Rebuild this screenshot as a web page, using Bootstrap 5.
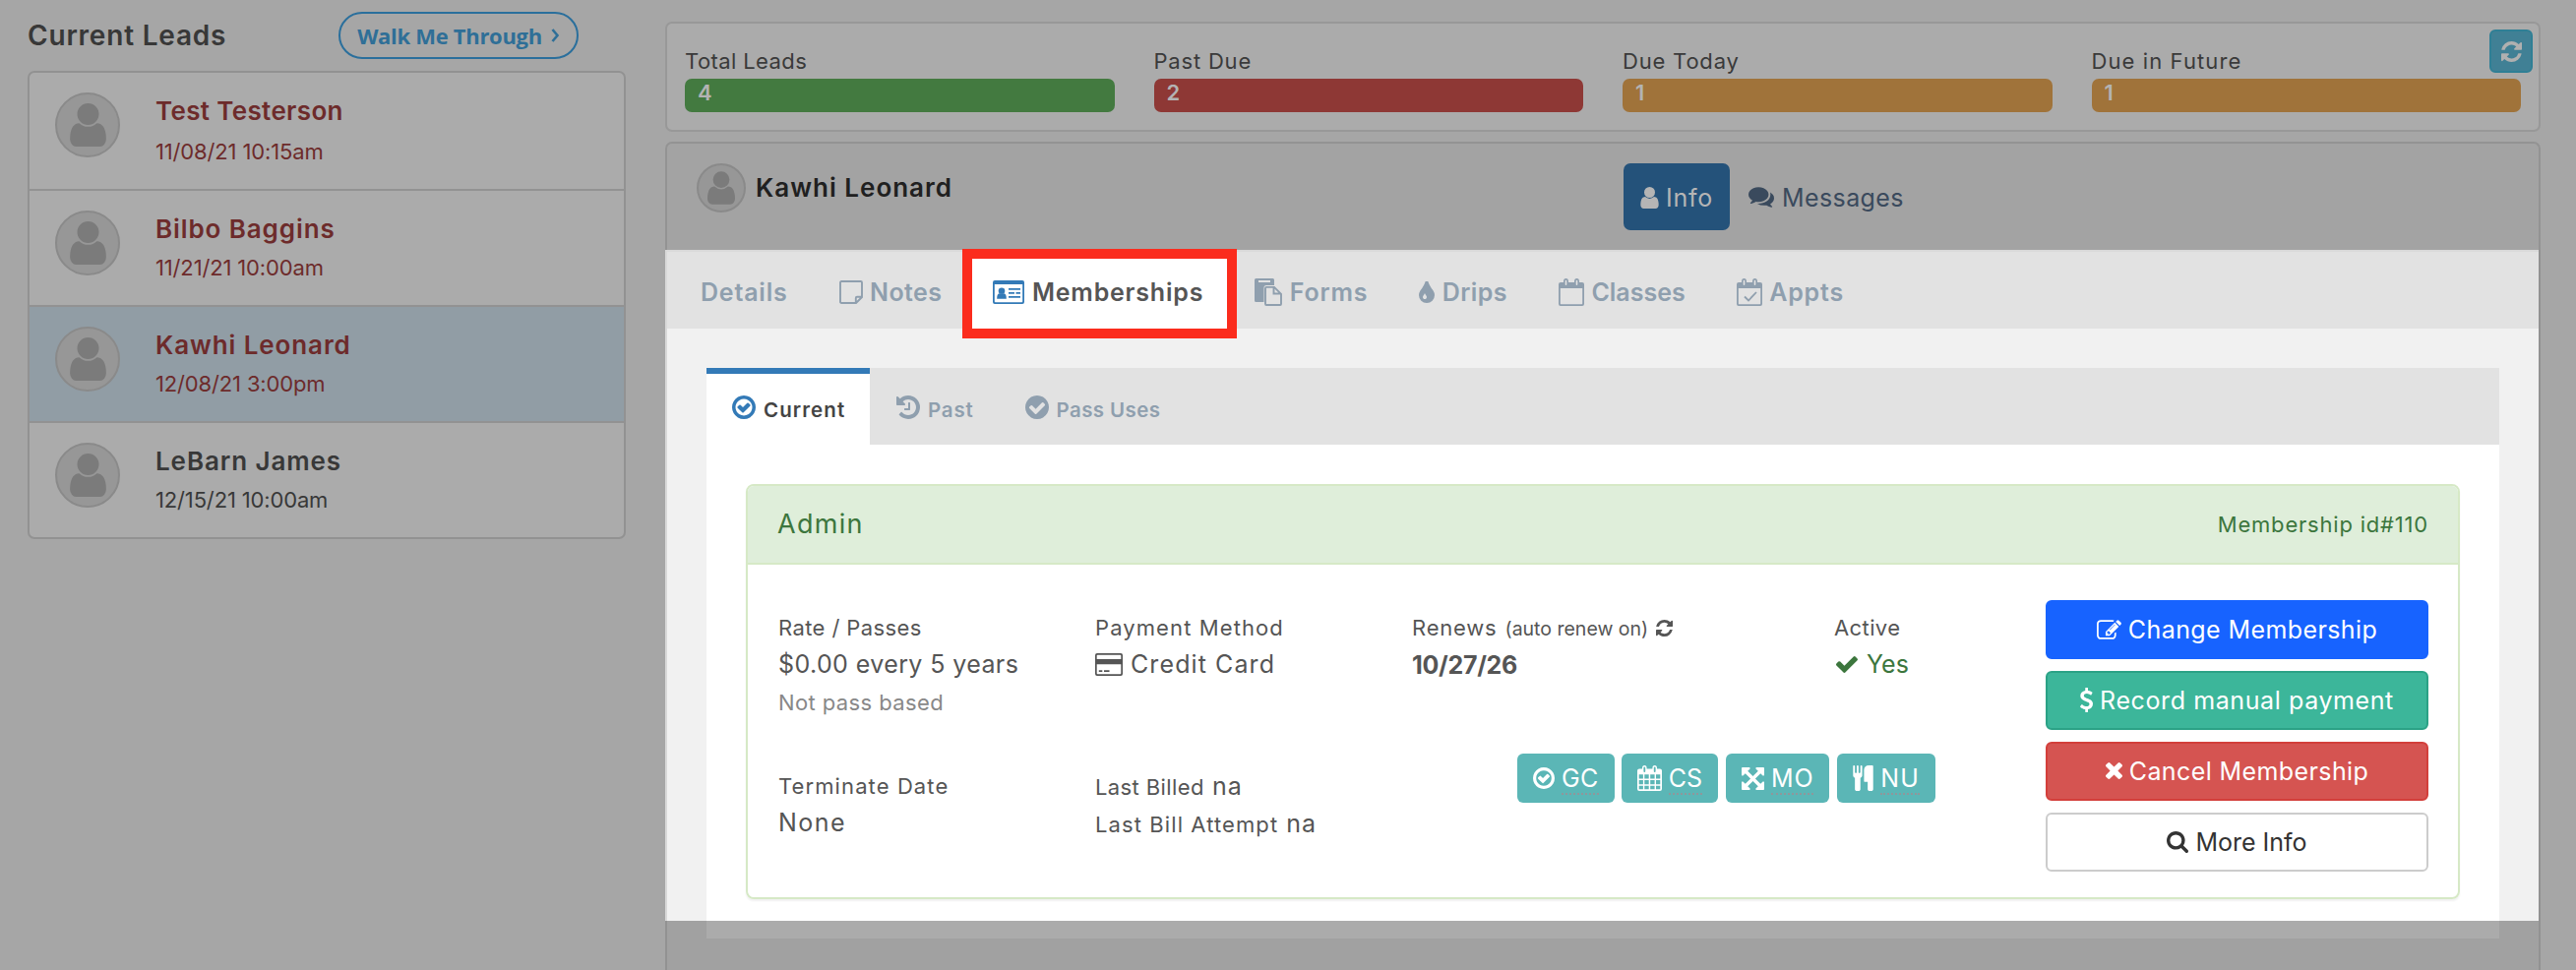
<!DOCTYPE html>
<html lang="en">
<head>
    <meta charset="UTF-8">
    <meta name="viewport" content="width=device-width, initial-scale=1">
    <title>Current Leads</title>
    <link href="https://cdn.jsdelivr.net/npm/bootstrap@5.3.2/dist/css/bootstrap.min.css" rel="stylesheet">
    <script defer src="https://cdn.jsdelivr.net/npm/bootstrap@5.3.2/dist/js/bootstrap.bundle.min.js"></script>
    <style>
        body {
            height: 986px;
            overflow: hidden;
            background: #a6a6a6;
            color: #555;
            font-family: Inter, "Liberation Sans", sans-serif;
            font-size: 25px;
            line-height: 30px;
            white-space: nowrap;
        }
        svg { flex: none; fill: currentColor; overflow: visible; }
        .ls-1 { letter-spacing: .4px; }
        .ls-2 { letter-spacing: .8px; }
        .ls-3 { letter-spacing: 1.1px; }
        .ls-4 { letter-spacing: 1.5px; }
        .fs-label { font-size: 22px; }

        /* leads list */
        .leads-col { width: 608px; margin-left: 28px; }
        .leads-head { height: 72px; padding-right: 48px; color: #383838; }
        .leads-title { font-size: 28px; letter-spacing: .8px; }
        .walk-btn {
            width: 244px;
            height: 48px;
            border: 2px solid #2a6f9c;
            border-radius: 24px;
            color: #2f6f97;
            font: 700 22px "Open Sans", sans-serif;
            letter-spacing: -.3px;
            gap: 9px;
        }
        .leads-list { border: 2px solid #929292; border-radius: 7px; background: #ababab; overflow: hidden; }
        .lead-row { height: 116px; padding: 20px 0 0 26px; gap: 36px; color: #6d2b2b; }
        .lead-row:first-child { height: 118px; }
        .lead-row + .lead-row { border-top: 2px solid #929292; height: 118px; }
        .lead-name { font-size: 26px; font-weight: 600; letter-spacing: .9px; }
        .lead-row:first-child .lead-name { letter-spacing: .35px; }
        .lead-date { margin-top: 9px; font-size: 22px; letter-spacing: -.15px; }
        .lead-row:first-child .lead-date { margin-top: 11px; }
        .lead-row.selected { background: #919da5; }
        .lead-row.upcoming { color: #383838; }
        .lead-text { padding-top: 4px; }
        .avatar {
            width: 66px;
            height: 66px;
            border: 2px solid #8a8a8a;
            border-radius: 50%;
            background: #979797;
            color: #7b7b7b;
        }

        /* summary */
        .main-col { width: 1906px; margin-left: 40px; padding-top: 22px; }
        .summary { height: 112px; border: 2px solid #989898; border-radius: 7px; background: #ababab; padding: 23px 18px 0; gap: 40px; color: #3a3a3a; }
        .meter { height: 34px; margin-top: 3px; padding-left: 13px; border-radius: 7px; color: #b3b3b3; font: 600 22px/28px Inter, sans-serif; }
        .meter-green { background: #437a40; }
        .meter-red { background: #8e3835; }
        .meter-orange { background: #a0733a; }
        .refresh-btn { top: 6px; right: 6px; width: 44px; height: 44px; border: 2px solid #2f7f95; border-radius: 6px; background: #408095; color: #b0b0b0; }

        /* lead detail */
        .detail-head { height: 110px; margin-top: 10px; border: 2px solid #939393; border-bottom: 0; border-radius: 7px 7px 0 0; background: #a3a3a3; padding: 20px 0 0 30px; }
        .detail-head .avatar { width: 50px; height: 50px; }
        .detail-name { width: 892px; padding: 10px 0 0 10px; color: #202020; font-size: 26px; letter-spacing: 1px; }
        .info-pill { width: 108px; height: 68px; border-radius: 7px; background: #24527a; color: #b5b5b5; gap: 7px; padding-top: 1px; }
        .msg-pill { height: 68px; padding: 1px 0 0 19px; color: #3a4a5d; gap: 8px; }
        .lit { height: 682px; border-left: 2px solid #d9d9d9; border-right: 2px solid #929292; background: #f1f1f1; }
        .lead-tabs { height: 80px; border-top: 2px solid #dadada; background: #e2e2e2; padding-left: 8px; color: #8f9fae; font-weight: 600; }
        .lead-tab { padding: 3px 26px 0; gap: 7.5px; }
        .lead-tab.current { background: #fff; color: #555; position: relative; }
        .lead-tab.current svg, .sub-tab.current svg { color: #337ab7; }
        .lead-tab.current::after { content: ""; position: absolute; inset: -3px -8px -10px -5px; border: 10px solid #fb2c1d; }
        .sub-wrap { margin: 40px 40px 0; height: 562px; background: #fff; }
        .sub-tabs { height: 78px; background: #e2e2e2; color: #8f9fae; font-size: 20.5px; font-weight: 600; }
        .sub-tab { border-top: 6px solid transparent; gap: 8px; padding: 1px 0 0 27px; }
        .sub-tab svg { margin-top: -5px; }
        .sub-tab.current { width: 166px; border-color: #337ab7; background: #fff; color: #444; padding-left: 26px; }

        /* membership panel */
        .member { margin: 40px 40px 0; height: 422px; border: 2px solid #d6e9c6; border-radius: 8px; box-shadow: 0 2px 2px rgba(0, 0, 0, .06); }
        .member-head { height: 80px; border-bottom: 2px solid #d6e9c6; border-radius: 6px 6px 0 0; background: #dfeeda; padding: 0 30px; color: #3c763d; }
        .member-name { font-size: 27px; letter-spacing: 1.3px; }
        .member-grid { display: grid; grid-template-columns: 322px 322px 429px 215px; grid-template-rows: 143px auto; padding: 49px 0 0 31px; }
        .value { margin-top: 7px; }
        .note { margin-top: 9px; color: #888; }
        .renew-note { font-size: 19.5px; }
        .renew-date { font-weight: 700; letter-spacing: -.3px; }
        .yes { color: #3c763d; gap: 9px; }
        .second { padding-top: 18px; }
        .chips { grid-column: 3 / 5; padding-left: 107px; gap: 8px; }
        .chip { height: 50px; border-radius: 6px; background: #5bb6b6; color: #fff; padding: 0 16px; gap: 7px; }
        .chip span { border-bottom: 2px dotted #8f979b; margin-bottom: -2px; }
        .chip:first-child { margin-right: -1px; }
        .actions { width: 390px; margin: 36px 30px 0 0; gap: 12px; }
        .act { height: 60px; border: 2px solid; border-radius: 6px; color: #fff; gap: 7px; padding-bottom: 1px; }
        .act-blue { background: #1763ff; border-color: #1763ff; }
        .act-teal { background: #3cb69a; border-color: #2ba286; letter-spacing: .6px; }
        .act-red { background: #d55451; border-color: #d33f3b; }
        .act-plain { background: #fff; border-color: #ccc; color: #333; }
        .detail-foot { height: 60px; border: solid #929292; border-width: 0 2px; background: #a1a1a1; padding: 0 40px; }
        .foot-strip { height: 18px; background: #ababab; }
    </style>
</head>
<body class="d-flex">

<svg width="0" height="0" class="position-absolute">
    <symbol id="user" viewBox="256 128 1280 1536"><path d="M1536 1399q0 109-62.5 187t-150.5 78h-854q-88 0-150.5-78t-62.5-187q0-85 8.5-160.5t31.5-152 58.5-131 94-89 134.5-34.5q131 128 313 128t313-128q76 0 134.5 34.5t94 89 58.5 131 31.5 152 8.5 160.5zm-256-887q0 159-112.5 271.5t-271.5 112.5-271.5-112.5-112.5-271.5 112.5-271.5 271.5-112.5 271.5 112.5 112.5 271.5z"/></symbol>
    <symbol id="refresh" viewBox="128 128 1536 1536"><path d="M1639 1056q0 5-1 7-64 268-268 434.5t-478 166.5q-146 0-282.5-55t-243.5-157l-129 129q-19 19-45 19t-45-19-19-45v-448q0-26 19-45t45-19h448q26 0 45 19t19 45-19 45l-137 137q71 66 161 102t187 36q134 0 250-65t186-179q11-17 53-117 8-23 30-23h192q13 0 22.5 9.5t9.5 22.5zm25-800v448q0 26-19 45t-45 19h-448q-26 0-45-19t-19-45 19-45l138-138q-148-137-349-137-134 0-250 65t-186 179q-11 17-53 117-8 23-30 23h-199q-13 0-22.5-9.5t-9.5-22.5v-7q65-268 270-434.5t480-166.5q146 0 284 55.5t245 156.5l130-129q19-19 45-19t45 19 19 45z"/></symbol>
    <symbol id="comments" viewBox="0 256 1792 1408"><path d="M1408 768q0 139-94 257t-256.5 186.5-353.5 68.5q-86 0-176-16-124 88-278 128-36 9-86 16h-3q-11 0-20.5-8t-11.5-21q-1-3-1-6.5t.5-6.5 2-6l2.5-5 3.5-5.5 4-5 4.5-5 4-4.5q5-6 23-25t26-29.5 22.5-29 25-38.5 20.5-44q-124-72-195-177t-71-224q0-139 94-257t256.5-186.5 353.5-68.5 353.5 68.5 256.5 186.5 94 257zm384 256q0 120-71 224.5t-195 176.5q10 24 20.5 44t25 38.5 22.5 29 26 29.5 23 25q1 1 4 4.5t4.5 5 4 5 3.5 5.5l2.5 5 2 6 .5 6.5-1 6.5q-3 14-13 22t-22 7q-50-7-86-16-154-40-278-128-90 16-176 16-271 0-472-132 58 4 88 4 161 0 309-45t264-129q125-92 192-212t67-254q0-77-23-152 129 71 204 178t75 230z"/></symbol>
    <symbol id="tint" viewBox="384 64 1024 1408"><path d="M896 1088q0-36-20-69-1-1-15.5-22.5t-25.5-38-25-44-21-50.5q-4-16-21-16t-21 16q-7 23-21 50.5t-25 44-25.5 38-15.5 22.5q-20 33-20 69 0 53 37.5 90.5t90.5 37.5 90.5-37.5 37.5-90.5zm512-128q0 212-150 362t-362 150-362-150-150-362q0-145 81-275 6-9 62.5-90.5t101-151 99.5-178 83-201.5q9-30 34-47t51-17 51.5 17 33.5 47q28 93 83 201.5t99.5 178 101 151 62.5 90.5q81 127 81 275z"/></symbol>
    <symbol id="check-circle-o" viewBox="128 128 1536 1536"><path d="M1299 813l-422 422q-19 19-45 19t-45-19l-294-294q-19-19-19-45t19-45l102-102q19-19 45-19t45 19l147 147 275-275q19-19 45-19t45 19l102 102q19 19 19 45t-19 45zm141 83q0-148-73-273t-198-198-273-73-273 73-198 198-73 273 73 273 198 198 273 73 273-73 198-198 73-273zm224 0q0 209-103 385.5t-279.5 279.5-385.5 103-385.5-103-279.5-279.5-103-385.5 103-385.5 279.5-279.5 385.5-103 385.5 103 279.5 279.5 103 385.5z"/></symbol>
    <symbol id="check-circle" viewBox="128 128 1536 1536"><path d="M1412 734q0-28-18-46l-91-90q-19-19-45-19t-45 19l-408 407-226-226q-19-19-45-19t-45 19l-91 90q-18 18-18 46 0 27 18 45l362 362q19 19 45 19 27 0 46-19l543-543q18-18 18-45zm252 162q0 209-103 385.5t-279.5 279.5-385.5 103-385.5-103-279.5-279.5-103-385.5 103-385.5 279.5-279.5 385.5-103 385.5 103 279.5 279.5 103 385.5z"/></symbol>
    <symbol id="history" viewBox="128 128 1536 1536"><path d="M1664 896q0 156-61 298t-164 245-245 164-298 61q-172 0-327-72.5t-264-204.5q-7-10-6.5-22.5t8.5-20.5l137-138q10-9 25-9 16 2 23 12 73 95 179 147t225 52q104 0 198.5-40.5t163.5-109.5 109.5-163.5 40.5-198.5-40.5-198.5-109.5-163.5-163.5-109.5-198.5-40.5q-98 0-188 35.5t-160 101.5l137 138q31 30 14 69-17 40-59 40h-448q-26 0-45-19t-19-45v-448q0-42 40-59 39-17 69 14l130 129q107-101 244.5-156.5t284.5-55.5q156 0 298 61t245 164 164 245 61 298zm-640-288v448q0 14-9 23t-23 9h-320q-14 0-23-9t-9-23v-64q0-14 9-23t23-9h224v-352q0-14 9-23t23-9h64q14 0 23 9t9 23z"/></symbol>
    <symbol id="check" viewBox="121 334 1550 1188"><path d="M1671 566q0 40-28 68l-724 724-136 136q-28 28-68 28t-68-28l-136-136-362-362q-28-28-28-68t28-68l136-136q28-28 68-28t68 28l294 295 656-657q28-28 68-28t68 28l136 136q28 28 28 68z"/></symbol>
    <symbol id="times" viewBox="302 366 1188 1188"><path d="M1490 1322q0 40-28 68l-136 136q-28 28-68 28t-68-28l-294-294-294 294q-28 28-68 28t-68-28l-136-136q-28-28-28-68t28-68l294-294-294-294q-28-28-28-68t28-68l136-136q28-28 68-28t68 28l294 294 294-294q28-28 68-28t68 28l136 136q28 28 28 68t-28 68l-294 294 294 294q28 28 28 68z"/></symbol>
    <symbol id="search" viewBox="64 128 1664 1664"><path d="M1216 832q0-185-131.5-316.5t-316.5-131.5-316.5 131.5-131.5 316.5 131.5 316.5 316.5 131.5 316.5-131.5 131.5-316.5zm512 832q0 52-38 90t-90 38q-54 0-90-38l-343-342q-179 124-399 124-143 0-273.5-55.5t-225-150-150-225-55.5-273.5 55.5-273.5 150-225 225-150 273.5-55.5 273.5 55.5 225 150 150 225 55.5 273.5q0 220-124 399l343 343q37 37 37 90z"/></symbol>
    <symbol id="usd" viewBox="430 0 932 1792"><path d="M1362 1185q0 153-99.5 263.5t-258.5 136.5v175q0 14-9 23t-23 9h-135q-13 0-22.5-9.5t-9.5-22.5v-175q-66-9-127.5-31t-101.5-44.5-74-48-46.5-37.5-17.5-18q-17-21-2-41l103-135q7-10 23-12 15-2 24 9l2 2q113 99 243 125 37 8 74 8 81 0 142.5-43t61.5-122q0-28-15-53t-33.5-42-58.5-37.5-66-32-80-32.5q-39-16-61.5-25t-61.5-26.5-62.5-31-56.5-35.5-53.5-42.5-43.5-49-35.5-58-21-66.5-8.5-78q0-138 98-242t255-134v-180q0-13 9.5-22.5t22.5-9.5h135q14 0 23 9t9 23v176q57 6 110.5 23t87 33.5 63.5 37.5 39 29 15 14q17 18 5 38l-81 146q-8 15-23 16-14 3-27-7-3-3-14.5-12t-39-26.5-58.5-32-74.5-26-85.5-11.5q-95 0-155 43t-60 111q0 26 8.5 48t29.5 41.5 39.5 33 56 31 60.5 27 70 27.5q53 20 81 31.5t76 35 75.5 42.5 62 50 53 63.5 31.5 76.5 13 94z"/></symbol>
    <symbol id="edit" viewBox="0 128 1792 1408"><path d="M888 1184l116-116-152-152-116 116v56h96v96h56zm440-720q-16-16-33 1l-350 350q-17 17-1 33t33-1l350-350q17-17 1-33zm80 594v190q0 119-84.5 203.5t-203.5 84.5h-832q-119 0-203.5-84.5t-84.5-203.5v-832q0-119 84.5-203.5t203.5-84.5h832q63 0 117 25 15 7 18 23 3 17-9 29l-49 49q-14 14-32 8-23-6-45-6h-832q-66 0-113 47t-47 113v832q0 66 47 113t113 47h832q66 0 113-47t47-113v-126q0-13 9-22l64-64q15-15 35-7t20 29zm-96-738l288 288-672 672h-288v-288zm444 132l-92 92-288-288 92-92q28-28 68-28t68 28l152 152q28 28 28 68t-28 68z"/></symbol>
    <symbol id="arrows" viewBox="128 128 1536 1536"><path d="M1411 541l-355 355 355 355 144-144q29-31 70-14 39 17 39 59v448q0 26-19 45t-45 19h-448q-42 0-59-40-17-39 14-69l144-144-355-355-355 355 144 144q31 30 14 69-17 40-59 40h-448q-26 0-45-19t-19-45v-448q0-42 40-59 39-17 69 14l144 144 355-355-355-355-144 144q-19 19-45 19-12 0-24-5-40-17-40-59v-448q0-26 19-45t45-19h448q42 0 59 40 17 39-14 69l-144 144 355 355 355-355-144-144q-31-30-14-69 17-40 59-40h448q26 0 45 19t19 45v448q0 42-39 59-13 5-25 5-26 0-45-19z"/></symbol>
    <symbol id="cutlery" viewBox="192 64 1408 1792"><path d="M832 128v640q0 61-35.5 111t-92.5 70v779q0 52-38 90t-90 38h-128q-52 0-90-38t-38-90v-779q-57-20-92.5-70t-35.5-111v-640q0-26 19-45t45-19 45 19 19 45v416q0 26 19 45t45 19 45-19 19-45v-416q0-26 19-45t45-19 45 19 19 45v416q0 26 19 45t45 19 45-19 19-45v-416q0-26 19-45t45-19 45 19 19 45zm768 0v1600q0 52-38 90t-90 38h-128q-52 0-90-38t-38-90v-512h-224q-13 0-22.5-9.5t-9.5-22.5v-800q0-132 94-226t226-94h256q26 0 45 19t19 45z"/></symbol>
    <symbol id="note" viewBox="0 0 24 24"><path d="M2.2 1h19.6q1.2 0 1.2 1.2V17l-6 6H2.2Q1 23 1 21.8V2.200Q1 1 2.200 1zM16.800 23v-5q0-1.200 1.200-1.200h5" fill="none" stroke="currentColor" stroke-width="1.900"/></symbol>
    <symbol id="id-card" viewBox="0 0 32 24"><path fill-rule="evenodd" d="M2 0h28q2 0 2 2v20q0 2-2 2H2q-2 0-2-2V2q0-2 2-2zM1.800 4v17.400q0 .8.8.8h26.800q.8 0 .8-.8V4z"/><circle cx="9" cy="10.700" r="3.300"/><path d="M4.200 18.800q-.2-5.500 3-5.500 1.800 1.400 3.600 0 3.200 0 3 5.500zM16 8h12v1.800H16zM16 12h6v1.800h-6zM23.500 12H28v1.800h-4.500zM16 16h12v1.800H16z"/></symbol>
    <symbol id="paste" viewBox="0 0 28 28"><path fill-rule="evenodd" d="M1.500 0h17q1.500 0 1.500 1.500V7h-8q-2.500 0-2.500 2.500V24h-8Q0 24 0 22.500v-21Q0 0 1.500 0zM4 2v2h12V2z"/><path d="M12 8.900h8l7 7V26q0 1-1 1H12q-1 0-1-1V9.900q0-1 1-1zM19.500 9v6.500h7" fill="none" stroke="currentColor" stroke-width="1.900"/></symbol>
    <symbol id="calendar" viewBox="0 0 26 28"><path fill-rule="evenodd" d="M2 4h3V3q0-3 2.500-3T10 3v1h6V3q0-3 2.500-3T21 3v1h3q2 0 2 2v20q0 2-2 2H2q-2 0-2-2V6q0-2 2-2zM1.800 10v15.500q0 .7.7.7h21q.7 0 .7-.7V10zM7.500 1.700q-.8 0-.8 1V6q0 1 .8 1t.8-1V2.700q0-1-.8-1zM18.500 1.700q-.8 0-.8 1V6q0 1 .8 1t.8-1V2.700q0-1-.8-1z"/></symbol>
    <symbol id="card-pay" viewBox="0 0 28 23"><path fill-rule="evenodd" d="M2 0h24q2 0 2 2v19q0 2-2 2H2q-2 0-2-2V2q0-2 2-2zM1.700 2.500V6h24.600V2.500q0-.8-.8-.8h-23q-.8 0-.8.800zM1.700 11.300v9.200q0 .8.8.8h23q.8 0 .8-.8v-9.200z"/><path d="M3.800 17.300h3.500V19H3.800zM9 17.300h5.500V19H9z"/></symbol>
</svg>

<div class="leads-col">
    <div class="leads-head d-flex align-items-center justify-content-between">
        <div class="leads-title fw-semibold">Current Leads</div>
        <div class="walk-btn d-flex align-items-center justify-content-center">Walk Me Through
            <svg width="9" height="14" viewBox="0 0 9 14"><path d="M1.500 1l5 6-5 6" fill="none" stroke="currentColor" stroke-width="2.600"/></svg>
        </div>
    </div>
    <div class="leads-list">
        <div class="lead-row d-flex">
            <div class="avatar d-flex align-items-center justify-content-center"><svg width="37" height="44"><use href="#user"/></svg></div>
            <div class="lead-text"><div class="lead-name">Test Testerson</div><div class="lead-date">11/08/21 10:15am</div></div>
        </div>
        <div class="lead-row d-flex">
            <div class="avatar d-flex align-items-center justify-content-center"><svg width="37" height="44"><use href="#user"/></svg></div>
            <div class="lead-text"><div class="lead-name">Bilbo Baggins</div><div class="lead-date">11/21/21 10:00am</div></div>
        </div>
        <div class="lead-row selected d-flex">
            <div class="avatar d-flex align-items-center justify-content-center"><svg width="37" height="44"><use href="#user"/></svg></div>
            <div class="lead-text"><div class="lead-name">Kawhi Leonard</div><div class="lead-date">12/08/21 3:00pm</div></div>
        </div>
        <div class="lead-row upcoming d-flex">
            <div class="avatar d-flex align-items-center justify-content-center"><svg width="37" height="44"><use href="#user"/></svg></div>
            <div class="lead-text"><div class="lead-name">LeBarn James</div><div class="lead-date">12/15/21 10:00am</div></div>
        </div>
    </div>
</div>

<div class="main-col">
    <div class="summary d-flex position-relative">
        <div class="flex-fill w-25"><div class="fs-label ls-1">Total Leads</div><div class="meter meter-green">4</div></div>
        <div class="flex-fill w-25"><div class="fs-label ls-2">Past Due</div><div class="meter meter-red">2</div></div>
        <div class="flex-fill w-25"><div class="fs-label ls-2">Due Today</div><div class="meter meter-orange">1</div></div>
        <div class="flex-fill w-25"><div class="fs-label ls-3">Due in Future</div><div class="meter meter-orange">1</div></div>
        <div class="refresh-btn position-absolute d-flex align-items-center justify-content-center"><svg width="21" height="21"><use href="#refresh"/></svg></div>
    </div>

    <div class="detail-head d-flex">
        <div class="avatar d-flex align-items-center justify-content-center flex-shrink-0"><svg width="28" height="34"><use href="#user"/></svg></div>
        <div class="detail-name fw-semibold">Kawhi Leonard</div>
        <div class="info-pill d-flex align-items-center justify-content-center"><svg width="19" height="22"><use href="#user"/></svg><span class="ls-2">Info</span></div>
        <div class="msg-pill d-flex align-items-center"><svg width="26" height="21"><use href="#comments"/></svg><span class="ls-1">Messages</span></div>
    </div>

    <div class="lit">
        <div class="lead-tabs d-flex">
            <div class="lead-tab d-flex align-items-center ls-2">Details</div>
            <div class="lead-tab d-flex align-items-center ls-1"><svg width="24" height="24"><use href="#note"/></svg>Notes</div>
            <div class="lead-tab current d-flex align-items-center ls-2"><svg width="32" height="24"><use href="#id-card"/></svg>Memberships</div>
            <div class="lead-tab d-flex align-items-center ls-2"><svg width="28" height="28"><use href="#paste"/></svg>Forms</div>
            <div class="lead-tab d-flex align-items-center ls-1"><svg width="16" height="22"><use href="#tint"/></svg>Drips</div>
            <div class="lead-tab d-flex align-items-center"><svg width="26" height="28"><use href="#calendar"/></svg>Classes</div>
            <div class="lead-tab d-flex align-items-center ls-2"><svg width="26" height="28"><use href="#calendar"/><path d="M8 18.500l4 4 8-8.500" fill="none" stroke="currentColor" stroke-width="1.800"/></svg>Appts</div>
        </div>

        <div class="sub-wrap">
            <div class="sub-tabs d-flex">
                <div class="sub-tab current d-flex align-items-center ls-3"><svg width="24" height="24"><use href="#check-circle-o"/></svg>Current</div>
                <div class="sub-tab d-flex align-items-center ls-2"><svg width="24" height="24"><use href="#history"/></svg>Past</div>
                <div class="sub-tab d-flex align-items-center ls-1 ps-5"><svg width="24" height="24" class="ms-1"><use href="#check-circle"/></svg>Pass Uses</div>
            </div>

            <div class="member">
                <div class="member-head d-flex align-items-center justify-content-between">
                    <span class="member-name">Admin</span><span class="fs-label ls-2">Membership id#110</span>
                </div>
                <div class="d-flex justify-content-between">
                    <div class="member-grid">
                        <div>
                            <div class="fs-label ls-1">Rate / Passes</div>
                            <div class="value ls-1">$0.00 every 5 years</div>
                            <div class="fs-label ls-1 note">Not pass based</div>
                        </div>
                        <div>
                            <div class="fs-label ls-3">Payment Method</div>
                            <div class="value ls-3 d-flex align-items-center gap-2"><svg width="28" height="23"><use href="#card-pay"/></svg>Credit Card</div>
                        </div>
                        <div>
                            <div class="d-flex align-items-baseline gap-2"><span class="fs-label ls-2">Renews</span><span class="renew-note">(auto renew on)</span><svg width="17" height="17" class="align-self-center"><use href="#refresh"/></svg></div>
                            <div class="value renew-date">10/27/26</div>
                        </div>
                        <div>
                            <div class="fs-label ls-1">Active</div>
                            <div class="value yes d-flex align-items-center"><svg width="22" height="17" style="margin-left: 2px"><use href="#check"/></svg>Yes</div>
                        </div>
                        <div class="second">
                            <div class="fs-label ls-3">Terminate Date</div>
                            <div class="value ls-4">None</div>
                        </div>
                        <div class="second">
                            <div class="d-flex align-items-baseline gap-2"><span class="fs-label ls-1">Last Billed</span><span class="ls-3">na</span></div>
                            <div class="value d-flex align-items-baseline gap-2"><span class="fs-label ls-3">Last Bill Attempt</span><span class="ls-3">na</span></div>
                        </div>
                        <div class="chips d-flex align-items-start">
                            <div class="chip d-flex align-items-center ls-1"><svg width="22" height="22"><use href="#check-circle-o"/></svg><span>GC</span></div>
                            <div class="chip d-flex align-items-center"><svg width="25" height="26" viewBox="0 0 25 26"><path fill-rule="evenodd" d="M2 3.500h3V2.800Q5 0 7.300 0t2.300 2.800v.7h5.800v-.7Q15.400 0 17.700 0T20 2.800v.7h3q2 0 2 2V24q0 2-2 2H2q-2 0-2-2V5.500q0-2 2-2zM7.300 1.500q-.9 0-.9 1V6q0 1 .9 1t.9-1V2.500q0-1-.9-1zM17.700 1.500q-.9 0-.9 1V6q0 1 .9 1t.9-1V2.500q0-1-.9-1zM1.700 9.300v4.200h4.200V9.300zM7.300 9.300v4.200h4.400V9.300zM13.200 9.300v4.200h4.400V9.300zM19 9.300v4.200h4.300V9.300zM1.700 15v4.200h4.200V15zM7.300 15v4.200h4.400V15zM13.200 15v4.200h4.400V15zM19 15v4.200h4.300V15zM1.700 20.700v3.500h4.200v-3.500zM7.300 20.700v3.500h4.400v-3.500zM13.200 20.700v3.500h4.400v-3.500zM19 20.700v3.500h4.300v-3.500z"/></svg><span>CS</span></div>
                            <div class="chip d-flex align-items-center ls-2"><svg width="23" height="23"><use href="#arrows"/></svg><span>MO</span></div>
                            <div class="chip d-flex align-items-center ls-3"><svg width="21" height="26"><use href="#cutlery"/></svg><span>NU</span></div>
                        </div>
                    </div>
                    <div class="actions d-flex flex-column">
                        <div class="act act-blue d-flex align-items-center justify-content-center ls-1"><svg width="25" height="20"><use href="#edit"/></svg>Change Membership</div>
                        <div class="act act-teal d-flex align-items-center justify-content-center"><svg width="13" height="25"><use href="#usd"/></svg>Record manual payment</div>
                        <div class="act act-red d-flex align-items-center justify-content-center ls-1"><svg width="17" height="17"><use href="#times"/></svg>Cancel Membership</div>
                        <div class="act act-plain d-flex align-items-center justify-content-center"><svg width="22" height="22"><use href="#search"/></svg>More Info</div>
                    </div>
                </div>
            </div>
        </div>
    </div>

    <div class="detail-foot"><div class="foot-strip"></div></div>
</div>

</body>
</html>
